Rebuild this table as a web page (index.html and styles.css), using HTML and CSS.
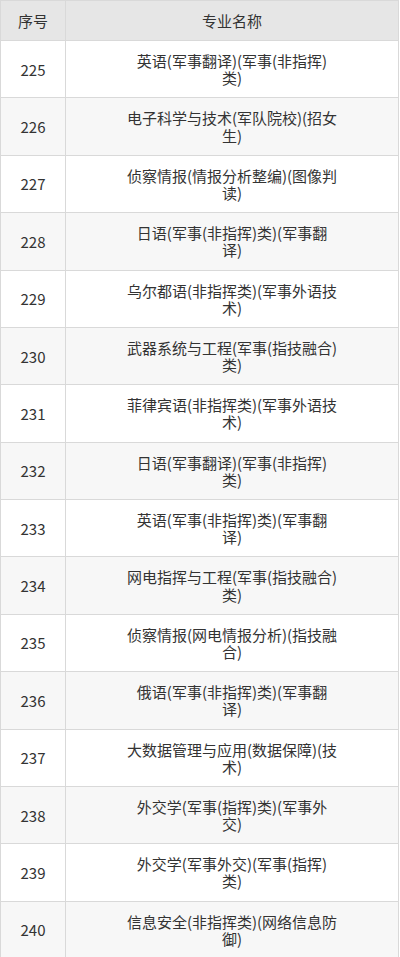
FILE: index.html
```html
<!DOCTYPE html>
<html lang="zh-CN">
<head>
<meta charset="utf-8">
<title>专业名称</title>
<link rel="stylesheet" href="styles.css">
</head>
<body>
<table class="majors">
  <thead>
    <tr><th class="col-no">序号</th><th class="col-name">专业名称</th></tr>
  </thead>
  <tbody>
    <tr><td class="no">225</td><td class="name">英语(军事翻译)(军事(非指挥)<br>类)</td></tr>
    <tr><td class="no">226</td><td class="name">电子科学与技术(军队院校)(招女<br>生)</td></tr>
    <tr><td class="no">227</td><td class="name">侦察情报(情报分析整编)(图像判<br>读)</td></tr>
    <tr><td class="no">228</td><td class="name">日语(军事(非指挥)类)(军事翻<br>译)</td></tr>
    <tr><td class="no">229</td><td class="name">乌尔都语(非指挥类)(军事外语技<br>术)</td></tr>
    <tr><td class="no">230</td><td class="name">武器系统与工程(军事(指技融合)<br>类)</td></tr>
    <tr><td class="no">231</td><td class="name">菲律宾语(非指挥类)(军事外语技<br>术)</td></tr>
    <tr><td class="no">232</td><td class="name">日语(军事翻译)(军事(非指挥)<br>类)</td></tr>
    <tr><td class="no">233</td><td class="name">英语(军事(非指挥)类)(军事翻<br>译)</td></tr>
    <tr><td class="no">234</td><td class="name">网电指挥与工程(军事(指技融合)<br>类)</td></tr>
    <tr><td class="no">235</td><td class="name">侦察情报(网电情报分析)(指技融<br>合)</td></tr>
    <tr><td class="no">236</td><td class="name">俄语(军事(非指挥)类)(军事翻<br>译)</td></tr>
    <tr><td class="no">237</td><td class="name">大数据管理与应用(数据保障)(技<br>术)</td></tr>
    <tr><td class="no">238</td><td class="name">外交学(军事(指挥)类)(军事外<br>交)</td></tr>
    <tr><td class="no">239</td><td class="name">外交学(军事外交)(军事(指挥)<br>类)</td></tr>
    <tr><td class="no">240</td><td class="name">信息安全(非指挥类)(网络信息防<br>御)</td></tr>
  </tbody>
</table>
</body>
</html>
```
FILE: styles.css
```css
html, body {
  margin: 0;
  padding: 0;
  background: #ffffff;
}
body {
  font-family: "Noto Sans CJK SC", "Noto Sans", sans-serif;
  font-size: 15px;
  color: #333333;
}
.majors {
  width: 399px;
  border-collapse: collapse;
  table-layout: fixed;
}
.majors th,
.majors td {
  border: 1px solid #d9d9d9;
  text-align: center;
  vertical-align: middle;
  white-space: nowrap;
}
.majors th {
  background: #e6e6e6;
  font-weight: normal;
  height: 39px;
  padding: 0;
  line-height: 20px;
}
.col-no {
  width: 64px;
}
.majors td {
  padding: 11.1px 0;
  line-height: 17.1px;
}
.majors tbody tr:nth-child(even) td {
  background: #f7f7f7;
}
```
